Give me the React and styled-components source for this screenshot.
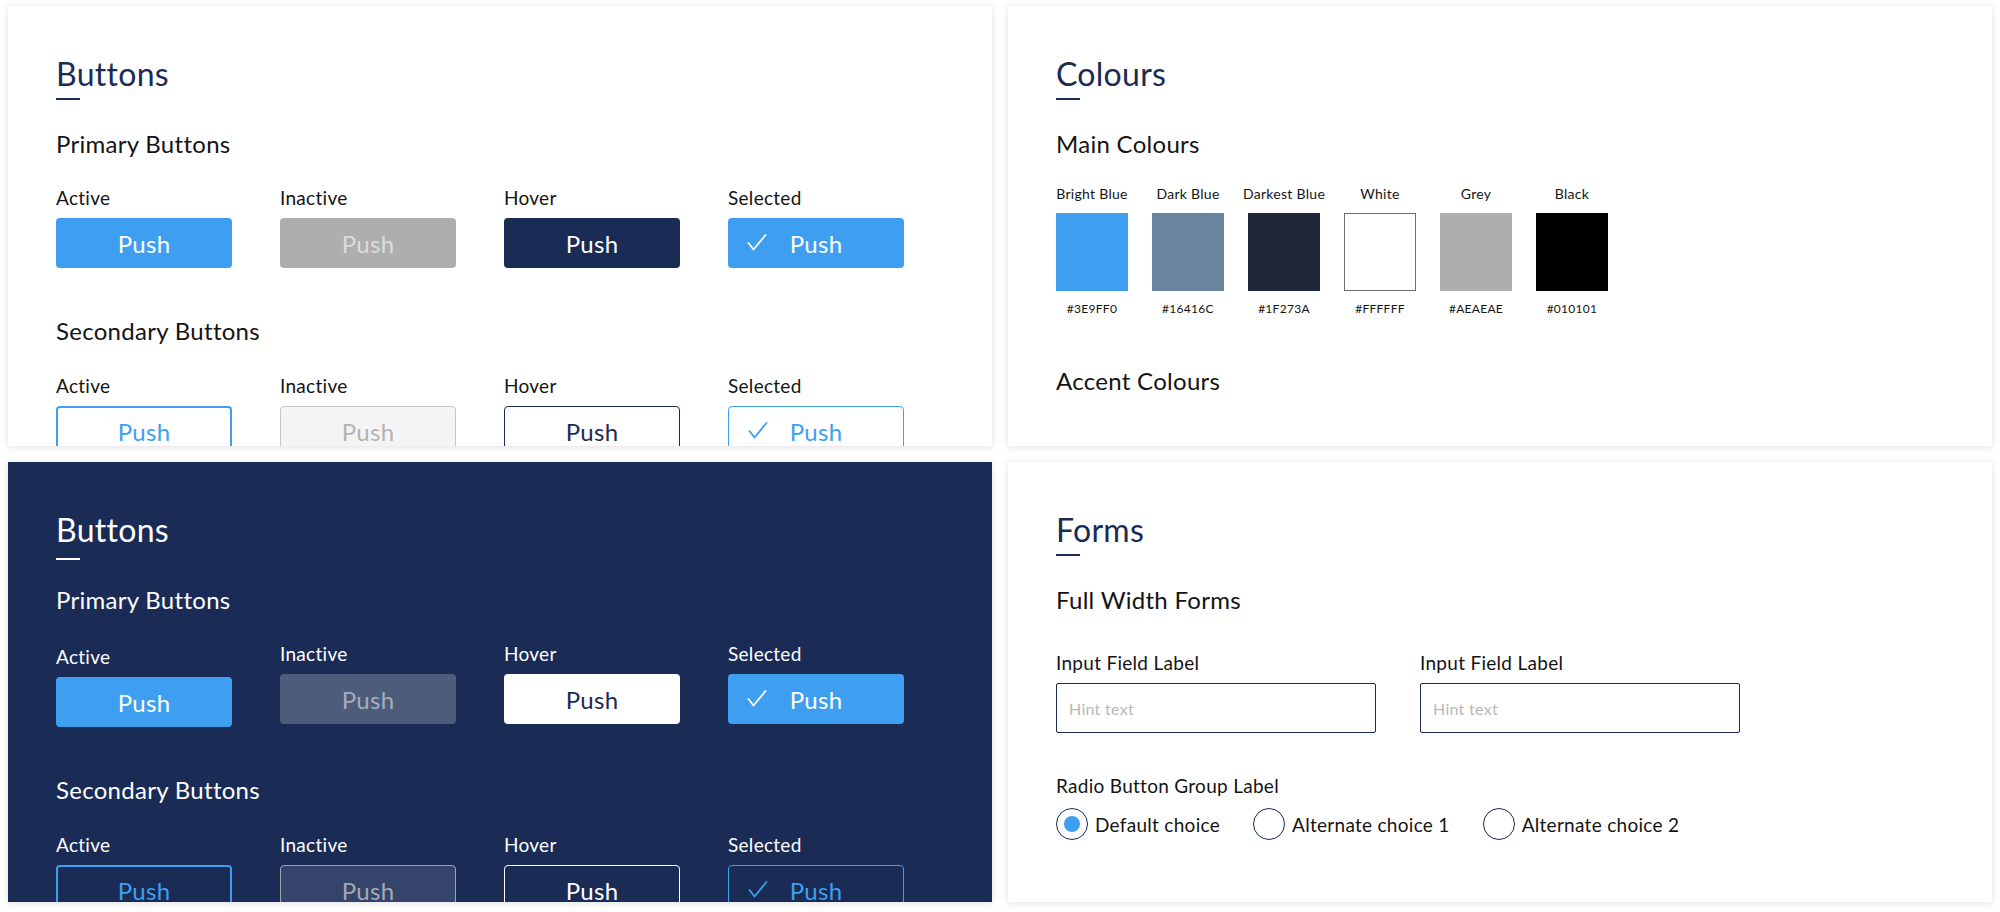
import React from 'react';
import styled, { createGlobalStyle, css } from 'styled-components';

const NAVY = '#1a2b56';
const BLUE = '#3e9ff0';
const INK = '#141414';

const GlobalStyle = createGlobalStyle`
  html, body {
    margin: 0;
    background: #ffffff;
    font-family: Lato, "Open Sans", sans-serif;
    letter-spacing: 0.018em;
  }
  * {
    box-sizing: border-box;
  }
`;

const swatches = [
  { name: 'Bright Blue', hex: '#3E9FF0', fill: '#3e9ff0' },
  { name: 'Dark Blue', hex: '#16416C', fill: '#6a84a0' },
  { name: 'Darkest Blue', hex: '#1F273A', fill: '#1f273a' },
  { name: 'White', hex: '#FFFFFF', fill: '#ffffff' },
  { name: 'Grey', hex: '#AEAEAE', fill: '#aeaeae' },
  { name: 'Black', hex: '#010101', fill: '#010101' },
];

const states = ['Active', 'Inactive', 'Hover', 'Selected'];

/* button looks by theme / kind / state */
const variants = {
  light: {
    primary: {
      Active: css`background: ${BLUE}; color: #fff;`,
      Inactive: css`background: #aeaeae; color: #dcdcdc;`,
      Hover: css`background: ${NAVY}; color: #fff;`,
      Selected: css`background: ${BLUE}; color: #fff;`,
    },
    secondary: {
      Active: css`background: #fff; border: 2px solid ${BLUE}; color: ${BLUE};`,
      Inactive: css`background: #f4f4f4; border: 1px solid #c6c6c6; color: #b3b3b3;`,
      Hover: css`background: #fff; border: 1px solid ${NAVY}; color: ${NAVY};`,
      Selected: css`background: #fff; border: 1px solid ${BLUE}; color: ${BLUE};`,
    },
  },
  dark: {
    primary: {
      Active: css`background: ${BLUE}; color: #fff;`,
      Inactive: css`background: #4e5c7c; color: #a6acb9;`,
      Hover: css`background: #fff; color: ${NAVY};`,
      Selected: css`background: ${BLUE}; color: #fff;`,
    },
    secondary: {
      Active: css`background: ${NAVY}; border: 2px solid ${BLUE}; color: ${BLUE};`,
      Inactive: css`background: #34446a; border: 1px solid #9ea3ad; color: #a4a9b3;`,
      Hover: css`background: ${NAVY}; border: 1px solid #fff; color: #fff;`,
      Selected: css`background: ${NAVY}; border: 1px solid ${BLUE}; color: ${BLUE};`,
    },
  },
};

function Check() {
  return (
    <CheckMark width="20" height="17" viewBox="0 0 20 17">
      <polyline
        points="1.5,9 6.5,15.5 18.5,1"
        fill="none"
        stroke="currentColor"
        strokeWidth="1.8"
        strokeLinecap="round"
        strokeLinejoin="round"
      />
    </CheckMark>
  );
}

function ButtonSet({ dark, kind, dropFirst }) {
  const theme = dark ? 'dark' : 'light';
  return (
    <ButtonGrid $top={kind === 'primary' ? 26 : 27}>
      {states.map((s, i) => (
        <Cell key={s} $drop={dropFirst && i === 0}>
          <StateLabel $dark={dark}>{s}</StateLabel>
          <Push $look={variants[theme][kind][s]}>
            {s === 'Selected' && <Check />}
            Push
          </Push>
        </Cell>
      ))}
    </ButtonGrid>
  );
}

function ButtonsPanel({ dark }) {
  return (
    <Panel $dark={dark}>
      <Title $dark={dark}>Buttons</Title>
      <SubHead $dark={dark} $top={dark ? 24 : 28}>Primary Buttons</SubHead>
      <ButtonSet dark={dark} kind="primary" dropFirst={dark} />
      <SubHead $dark={dark} $top={47}>Secondary Buttons</SubHead>
      <ButtonSet dark={dark} kind="secondary" />
    </Panel>
  );
}

function ColoursPanel() {
  return (
    <Panel>
      <Title>Colours</Title>
      <SubHead $top={28}>Main Colours</SubHead>
      <SwatchRow>
        {swatches.map((c) => (
          <Swatch key={c.name}>
            <SwatchName>{c.name}</SwatchName>
            <Chip $fill={c.fill} $outlined={c.fill === '#ffffff'} />
            <SwatchHex>{c.hex}</SwatchHex>
          </Swatch>
        ))}
      </SwatchRow>
      <SubHead $top={48}>Accent Colours</SubHead>
    </Panel>
  );
}

function FormsPanel() {
  const choices = ['Default choice', 'Alternate choice 1', 'Alternate choice 2'];
  return (
    <Panel>
      <Title>Forms</Title>
      <SubHead $top={28}>Full Width Forms</SubHead>
      <FieldRow>
        <Field>
          <StateLabel>Input Field Label</StateLabel>
          <TextInput placeholder="Hint text" />
        </Field>
        <Field>
          <StateLabel>Input Field Label</StateLabel>
          <TextInput placeholder="Hint text" />
        </Field>
      </FieldRow>
      <RadioGroup>
        <StateLabel>Radio Button Group Label</StateLabel>
        <RadioRow>
          {choices.map((c, i) => (
            <Choice key={c}>
              <RadioDot $on={i === 0} />
              {c}
            </Choice>
          ))}
        </RadioRow>
      </RadioGroup>
    </Panel>
  );
}

export default function App() {
  return (
    <>
      <GlobalStyle />
      <Board>
        <ButtonsPanel />
        <ColoursPanel />
        <ButtonsPanel dark />
        <FormsPanel />
      </Board>
    </>
  );
}

const Board = styled.main`
  display: grid;
  grid-template-columns: 984px 984px;
  grid-template-rows: 440px 440px;
  gap: 16px;
  padding: 6px 8px 10px;
`;

const Panel = styled.section`
  background: ${({ $dark }) => ($dark ? NAVY : '#ffffff')};
  box-shadow: 0 1px 7px rgba(0, 0, 0, 0.13);
  padding: 48px 48px 0;
  overflow: hidden;
`;

const Title = styled.h2`
  margin: 0;
  font-size: 32px;
  line-height: 40px;
  font-weight: 400;
  color: ${({ $dark }) => ($dark ? '#ffffff' : NAVY)};

  &::after {
    content: '';
    display: block;
    width: 24px;
    height: 2px;
    margin-top: ${({ $dark }) => ($dark ? 8 : 4)}px;
    background: currentColor;
  }
`;

const SubHead = styled.h3`
  margin: ${({ $top }) => $top}px 0 0;
  font-size: 24px;
  line-height: 32px;
  font-weight: 400;
  color: ${({ $dark }) => ($dark ? '#ffffff' : INK)};
`;

const ButtonGrid = styled.div`
  display: grid;
  grid-template-columns: repeat(4, 176px);
  column-gap: 48px;
  align-items: start;
  margin-top: ${({ $top }) => $top}px;
`;

const Cell = styled.div`
  display: flex;
  flex-direction: column;
  gap: 8px;
  padding-top: ${({ $drop }) => ($drop ? 3 : 0)}px;
`;

const StateLabel = styled.div`
  font-size: 19px;
  line-height: 24px;
  color: ${({ $dark }) => ($dark ? '#ffffff' : INK)};
`;

const Push = styled.div`
  position: relative;
  height: 50px;
  border-radius: 4px;
  display: flex;
  align-items: center;
  justify-content: center;
  font-size: 24px;
  ${({ $look }) => $look}
`;

const CheckMark = styled.svg`
  position: absolute;
  left: 19px;
  top: 50%;
  margin-top: -9px;
`;

const SwatchRow = styled.div`
  display: grid;
  grid-template-columns: repeat(6, 72px);
  column-gap: 24px;
  margin-top: 25px;
`;

const Swatch = styled.div`
  display: flex;
  flex-direction: column;
  align-items: center;
  color: ${INK};
  white-space: nowrap;
`;

const SwatchName = styled.div`
  font-size: 14px;
  line-height: 18px;
`;

const Chip = styled.div`
  width: 72px;
  height: 78px;
  margin-top: 10px;
  background: ${({ $fill }) => $fill};
  border: ${({ $outlined }) => ($outlined ? '1px solid #6f6f6f' : 'none')};
`;

const SwatchHex = styled.div`
  margin-top: 10px;
  font-size: 12px;
  line-height: 16px;
`;

const FieldRow = styled.div`
  display: flex;
  gap: 44px;
  margin-top: 35px;
`;

const Field = styled.div`
  display: flex;
  flex-direction: column;
  gap: 8px;
`;

const TextInput = styled.input`
  width: 320px;
  height: 50px;
  padding: 0 12px;
  border: 1px solid ${NAVY};
  border-radius: 2px;
  font-family: inherit;
  font-size: 16px;
  letter-spacing: inherit;
  color: ${INK};
  outline: none;

  &::placeholder {
    color: #b8b8b8;
  }
`;

const RadioGroup = styled.div`
  margin-top: 41px;
`;

const RadioRow = styled.div`
  display: flex;
  gap: 33px;
  margin-top: 10px;
`;

const Choice = styled.label`
  display: flex;
  align-items: center;
  gap: 7px;
  font-size: 19px;
  color: ${INK};
`;

const RadioDot = styled.span`
  width: 32px;
  height: 32px;
  border: 1px solid ${NAVY};
  border-radius: 50%;
  display: flex;
  align-items: center;
  justify-content: center;

  &::after {
    content: '';
    width: 16px;
    height: 16px;
    border-radius: 50%;
    background: ${({ $on }) => ($on ? BLUE : 'transparent')};
  }
`;
